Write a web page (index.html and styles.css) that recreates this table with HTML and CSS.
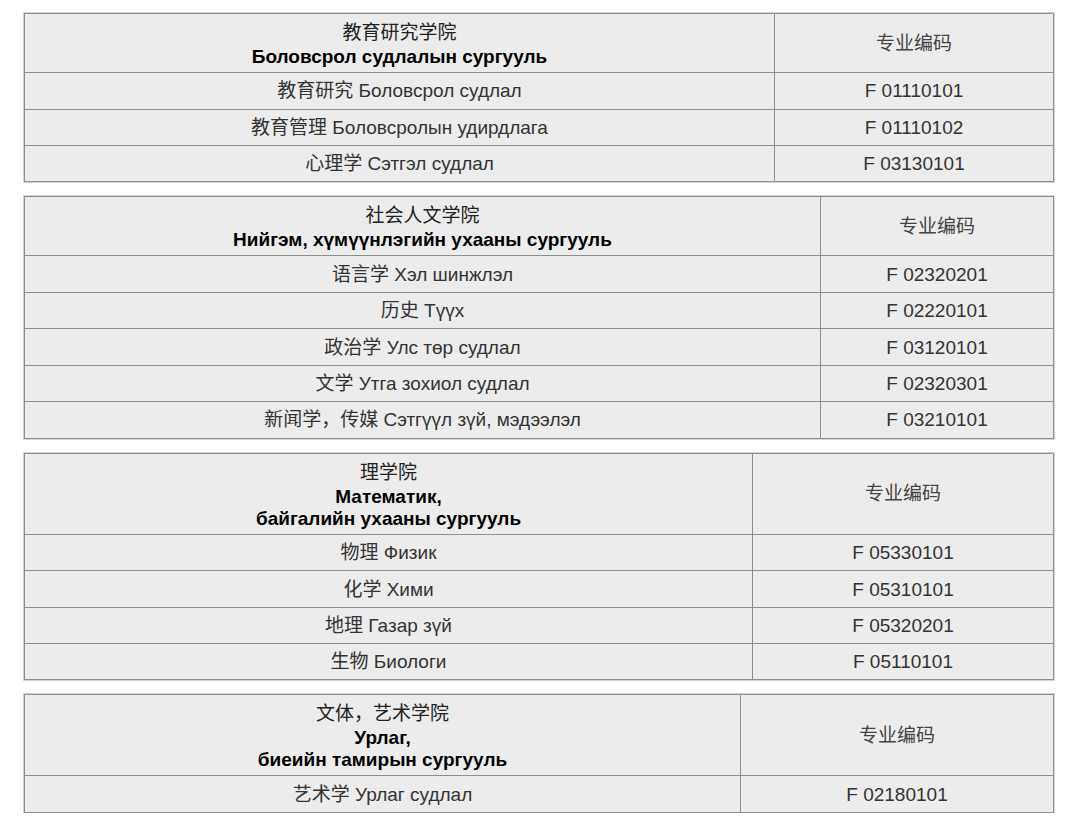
FILE: index.html
```html
<!DOCTYPE html>
<html lang="zh">
<head>
<meta charset="utf-8">
<title>专业编码</title>
<link rel="stylesheet" href="styles.css">
</head>
<body>
<div class="page">
  <table class="tbl t1">
    <colgroup><col class="c1"><col></colgroup>
    <tr class="head">
      <td><span class="zh">教育研究学院</span><b>Боловсрол судлалын сургууль</b></td>
      <td class="code-h">专业编码</td>
    </tr>
    <tr><td>教育研究 Боловсрол судлал</td><td>F 01110101</td></tr>
    <tr><td>教育管理 Боловсролын удирдлага</td><td>F 01110102</td></tr>
    <tr><td>心理学 Сэтгэл судлал</td><td>F 03130101</td></tr>
  </table>

  <table class="tbl t2">
    <colgroup><col class="c1"><col></colgroup>
    <tr class="head">
      <td><span class="zh">社会人文学院</span><b>Нийгэм, хүмүүнлэгийн ухааны сургууль</b></td>
      <td class="code-h">专业编码</td>
    </tr>
    <tr><td>语言学 Хэл шинжлэл</td><td>F 02320201</td></tr>
    <tr><td>历史 Түүх</td><td>F 02220101</td></tr>
    <tr><td>政治学 Улс төр судлал</td><td>F 03120101</td></tr>
    <tr><td>文学 Утга зохиол судлал</td><td>F 02320301</td></tr>
    <tr><td>新闻学，传媒 Сэтгүүл зүй, мэдээлэл</td><td>F 03210101</td></tr>
  </table>

  <table class="tbl t3">
    <colgroup><col class="c1"><col></colgroup>
    <tr class="head">
      <td><span class="zh">理学院</span><b>Математик,<br>байгалийн ухааны сургууль</b></td>
      <td class="code-h">专业编码</td>
    </tr>
    <tr><td>物理 Физик</td><td>F 05330101</td></tr>
    <tr><td>化学 Хими</td><td>F 05310101</td></tr>
    <tr><td>地理 Газар зүй</td><td>F 05320201</td></tr>
    <tr><td>生物 Биологи</td><td>F 05110101</td></tr>
  </table>

  <table class="tbl t4">
    <colgroup><col class="c1"><col></colgroup>
    <tr class="head">
      <td><span class="zh">文体，艺术学院</span><b>Урлаг,<br>биеийн тамирын сургууль</b></td>
      <td class="code-h">专业编码</td>
    </tr>
    <tr><td>艺术学 Урлаг судлал</td><td>F 02180101</td></tr>
  </table>
</div>
</body>
</html>
```

FILE: styles.css
```css
html, body {
  margin: 0;
  padding: 0;
  background: #ffffff;
}

.page {
  padding: 13px 0 0 24px;
  width: 1030px;
  display: flex;
  flex-direction: column;
  gap: 14px;
  font-family: "Liberation Sans", Arial, "Noto Sans CJK SC", sans-serif;
}

.tbl {
  width: 1030px;
  border-collapse: collapse;
  table-layout: fixed;
  background: #ececec;
  font-size: 19px;
  color: #333333;
  box-shadow: 0 0 0 1px #d4d4d4;
}

.tbl td {
  border: 1px solid #8e8e8e;
  text-align: center;
  vertical-align: middle;
  padding: 4.1px 4px 4px;
  line-height: 27px;
}

.tbl tr:nth-child(even) td {
  padding: 4.35px 4px;
}

.tbl .head td {
  padding: 5px 4px 4px;
  line-height: 22px;
}

.tbl .head .zh {
  display: block;
  line-height: 27px;
  color: #222222;
}

.tbl .head b {
  display: block;
  line-height: 22px;
  color: #000000;
  font-weight: bold;
}

.tbl .head .code-h {
  color: #444444;
  line-height: 28px;
}

.t1 .c1 { width: 750px; }
.t2 .c1 { width: 796px; }
.t3 .c1 { width: 728px; }
.t4 .c1 { width: 716px; }
```
